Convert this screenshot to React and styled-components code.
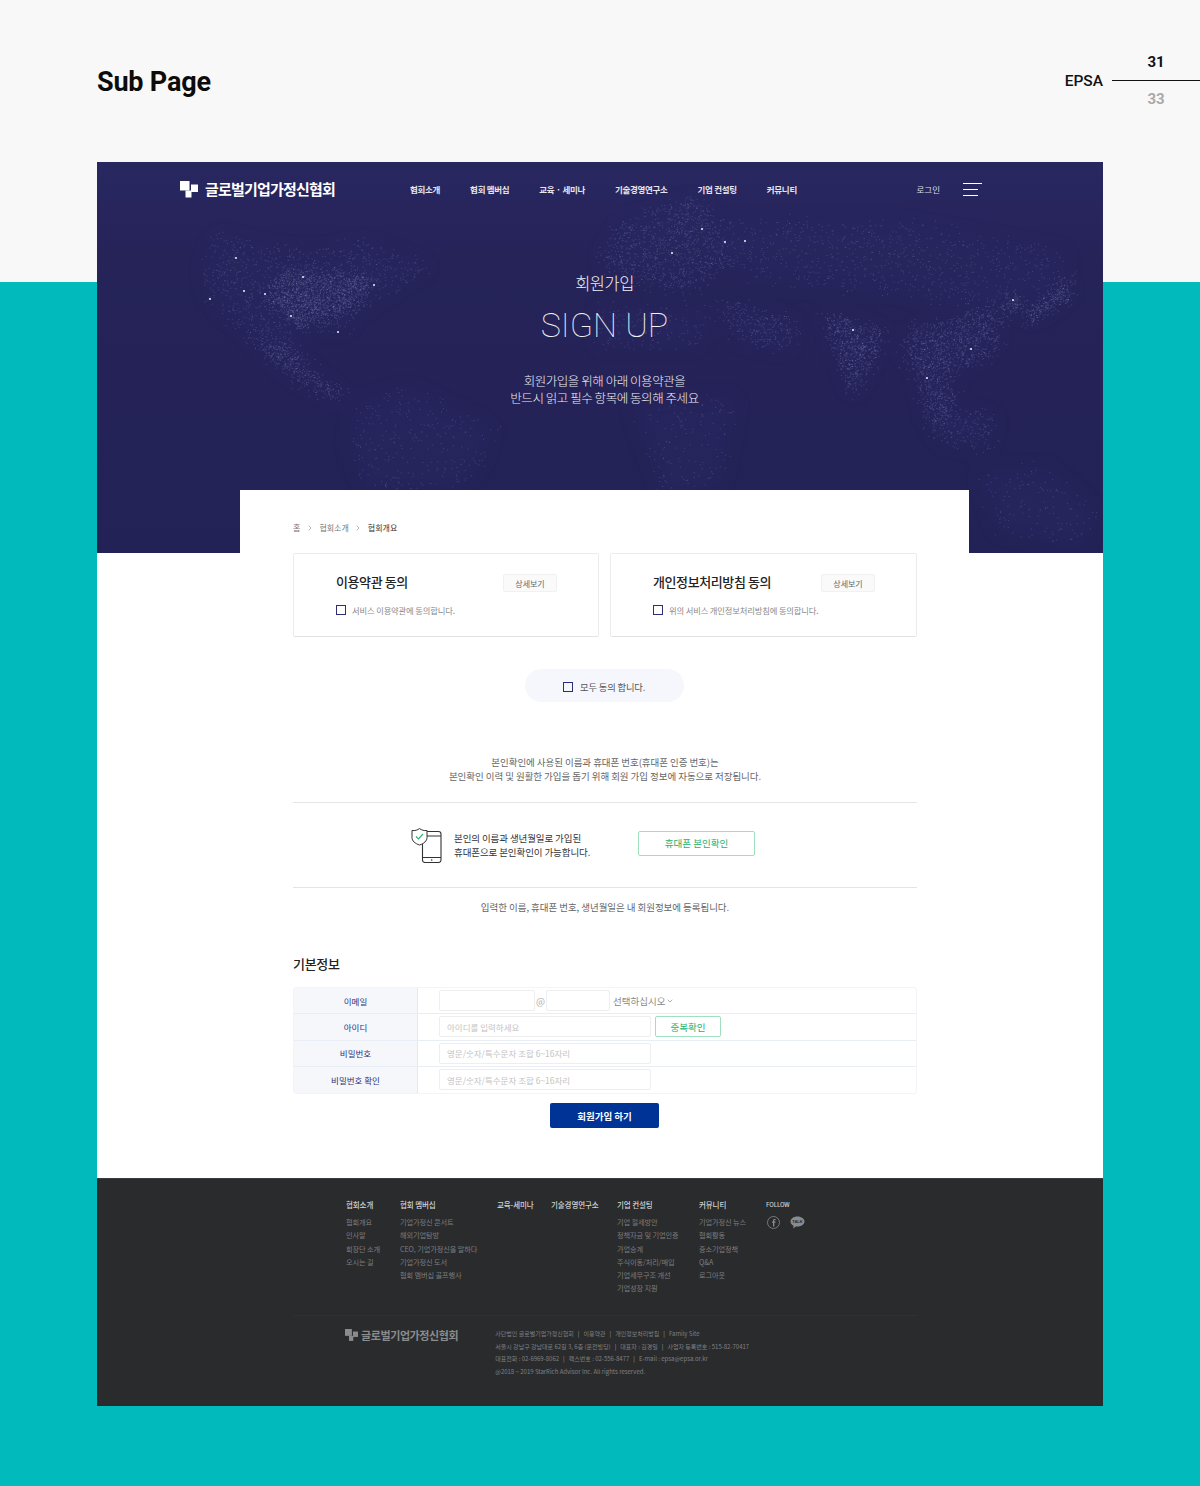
import React from 'react'
import styled, { createGlobalStyle } from 'styled-components'
import { ChevronDown, ChevronRight } from 'lucide-react'

const KR = `"Noto Sans CJK KR", "Noto Sans", sans-serif`

const GlobalStyle = createGlobalStyle`
	body {
		margin: 0;
		font-family: ${KR};
		background: #00babc;
	}
	* { box-sizing: border-box; }
`

const Page = styled.div`
	width: 1200px;
	height: 1486px;
	padding-bottom: 80px;
	background: linear-gradient(#f8f8f8 282px, #00babc 282px);
	overflow: hidden;
`

const TopBar = styled.header`
	height: 162px;
	padding: 53px 0 0 97px;
	display: flex;
	align-items: flex-start;
	justify-content: space-between;
	font-family: Roboto, sans-serif;
`

const PageTitle = styled.h1`
	margin: 0;
	padding-top: 10px;
	font-size: 27px;
	line-height: 38px;
	letter-spacing: -0.2px;
	font-weight: 700;
	color: #0c0c0c;
`

const Pager = styled.div`
	display: flex;
	align-items: center;
	gap: 9px;
`

const PagerName = styled.span`
	font-size: 15.5px;
	font-weight: 500;
	color: #111;
`

const PagerColumn = styled.div`
	width: 88px;
	text-align: center;
	font-size: 15px;
	font-weight: 700;
	line-height: 18px;
`

const PagerNumber = styled.div`
	color: ${props => props.muted ? '#a9a9a9' : '#111'};
	padding: ${props => props.muted ? '9px 0 0' : '0 0 9px'};
`

const PagerLine = styled.div`
	height: 1px;
	background: #111;
`

const Frame = styled.div`
	width: 1006px;
	height: 1244px;
	margin-left: 97px;
	background: #fff;
	display: flex;
	flex-direction: column;
`

const Hero = styled.section`
	position: relative;
	height: 391px;
	flex: none;
	overflow: hidden;
	background: linear-gradient(#292760, #252358 25%, #232256);
	color: #fff;
`

const MapArt = styled.svg`
	position: absolute;
	left: 0;
	top: 0;
`

const NavBar = styled.nav`
	position: relative;
	height: 54px;
	padding: 0 121px 0 83px;
	display: flex;
	align-items: center;
`

const Logo = styled.div`
	display: flex;
	align-items: center;
	align-self: flex-start;
	gap: ${props => props.small ? '3px' : '7px'};
	font-size: ${props => props.small ? '11px' : '15px'};
	line-height: ${props => props.small ? '14px' : '54px'};
	font-weight: 700;
	letter-spacing: ${props => props.small ? '-0.4px' : '-0.8px'};
	color: ${props => props.small ? '#8a8b8c' : '#fff'};
	white-space: nowrap;
`

const NavList = styled.div`
	margin: -1px 0 0 75px;
	display: flex;
	gap: 30px;
`

const NavItem = styled.a`
	font-size: 8.5px;
	font-weight: 700;
	letter-spacing: -0.3px;
	color: #e6e6ee;
	white-space: nowrap;
`

const LoginLink = styled.a`
	margin-left: auto;
	font-size: 8.5px;
	color: #dcdce8;
`

const Burger = styled.div`
	margin-left: 23px;
	width: 19px;
	display: flex;
	flex-direction: column;
	gap: 5px;
`

const BurgerLine = styled.i`
	display: block;
	height: 1px;
	background: #fff;
	width: ${props => props.short ? '15px' : '19px'};
`

const HeroText = styled.div`
	position: relative;
	padding: 55px 0 0 9px;
	text-align: center;
`

const HeroLabel = styled.div`
	font-size: 16.5px;
	line-height: 25px;
	font-weight: 300;
	letter-spacing: -0.5px;
	color: #eeeef4;
`

const HeroTitle = styled.h2`
	margin: 9px 0 0;
	font-family: Roboto, sans-serif;
	font-size: 34px;
	line-height: 41px;
	font-weight: 100;
	color: #f2f2f6;
`

const HeroCopy = styled.p`
	margin: 26px 0 0;
	font-size: 12.5px;
	line-height: 17px;
	font-weight: 300;
	letter-spacing: -0.45px;
	color: #eeeef4;
`

const Sheet = styled.main`
	position: relative;
	flex: none;
	width: 729px;
	height: 688px;
	margin: -63px 0 0 143px;
	padding: 0 52px 0 53px;
	background: #fff;
`

const Crumbs = styled.div`
	height: 63px;
	padding-top: 31px;
	display: flex;
	align-items: flex-start;
	gap: 5.5px;
	font-size: 8px;
	line-height: 14px;
	color: #777;
	svg { margin-top: 3px; color: #999; }
`

const CrumbCurrent = styled.span`
	color: #333;
`

const Agreements = styled.div`
	display: grid;
	grid-template-columns: 306px 307px;
	gap: 11px;
`

const AgreeCard = styled.div`
	height: 84px;
	padding: 18px 41px 0 42px;
	border: 1px solid #ececec;
	border-bottom-color: #e2e2e2;
	border-radius: 2px;
`

const AgreeHead = styled.div`
	display: flex;
	align-items: center;
	justify-content: space-between;
`

const AgreeTitle = styled.h3`
	margin: 0;
	font-size: 13px;
	line-height: 20px;
	font-weight: 500;
	letter-spacing: -0.4px;
	color: #222;
`

const DetailButton = styled.button`
	width: 54px;
	height: 18px;
	margin-top: 2px;
	padding: 0;
	border: 1px solid #f1f1f1;
	border-radius: 2px;
	background: #fafafa;
	font-family: ${KR};
	font-size: 8px;
	color: #666;
`

const CheckRow = styled.label`
	margin-top: ${props => props.flush ? '0' : '12px'};
	display: flex;
	align-items: center;
	gap: ${props => props.flush ? '7px' : '6px'};
	font-size: ${props => props.flush ? '9.3px' : '8.3px'};
	line-height: 12px;
	letter-spacing: -0.15px;
	color: ${props => props.flush ? '#555' : '#888'};
`

const CheckBox = styled.span`
	flex: none;
	width: 10px;
	height: 10px;
	border: 1px solid #2c2f78;
`

const AgreeAll = styled.div`
	width: 159px;
	height: 33px;
	margin: 32px 0 0 232px;
	padding: 3px 0 0 38px;
	display: flex;
	align-items: center;
	border-radius: 17px;
	background: #f5f7fc;
`

const Notice = styled.p`
	margin: ${props => props.top || '0'};
	text-align: center;
	font-size: 9.5px;
	line-height: 14px;
	letter-spacing: -0.05px;
	color: #666;
`

const VerifyBox = styled.div`
	height: 86px;
	margin-top: 19px;
	padding-left: 118px;
	display: flex;
	align-items: center;
	border-top: 1px solid #e4e4e4;
	border-bottom: 1px solid #e4e4e4;
`

const VerifyText = styled.div`
	margin-left: 12px;
	width: 184px;
	font-size: 9.5px;
	line-height: 14px;
	letter-spacing: -0.1px;
	color: #333;
`

const GreenButton = styled.button`
	width: ${props => props.small ? '66px' : '117px'};
	height: ${props => props.small ? '21px' : '25px'};
	padding: 0;
	margin: ${props => props.small ? '0 0 0 3px' : '0 0 4px'};
	border: 1px solid #9fe0bf;
	border-radius: 2px;
	background: #fff;
	font-family: ${KR};
	font-size: 9.5px;
	color: #23b26a;
`

const SectionTitle = styled.h3`
	margin: 40px 0 13px;
	font-size: 13px;
	line-height: 20px;
	font-weight: 500;
	letter-spacing: -0.3px;
	color: #222;
`

const FormTable = styled.div`
	border: 1px solid #f2f4f9;
	border-radius: 3px;
`

const FormRow = styled.div`
	display: grid;
	grid-template-columns: 124px 1fr;
	height: 26.25px;
	border-bottom: ${props => props.last ? 'none' : '1px solid #e9edf6'};
`

const RowLabel = styled.div`
	display: flex;
	align-items: center;
	justify-content: center;
	background: #f5f7fb;
	border-right: 1px solid #e4e9f4;
	font-size: 8.5px;
	color: #2c3278;
`

const RowField = styled.div`
	display: flex;
	align-items: center;
	gap: 1px;
	padding-left: 21px;
`

const TextInput = styled.input`
	width: ${props => props.width}px;
	height: 21px;
	padding: 0 7px;
	border: 1px solid #eeeeee;
	border-radius: 2px;
	background: #fff;
	font-family: ${KR};
	font-size: 8.5px;
	outline: none;
	&::placeholder { color: #c4c4c4; }
`

const AtSign = styled.span`
	width: 9px;
	font-size: 9.5px;
	color: #aaa;
`

const SelectText = styled.span`
	margin-left: 2px;
	display: flex;
	align-items: center;
	gap: 1px;
	font-size: 9.5px;
	color: #888;
`

const SubmitButton = styled.button`
	display: block;
	width: 109px;
	height: 25px;
	margin: 9px 0 0 257px;
	padding: 0;
	border: none;
	border-radius: 2px;
	background: #003396;
	font-family: ${KR};
	font-size: 9.5px;
	font-weight: 700;
	color: #fff;
`

const Footer = styled.footer`
	flex: none;
	height: 228px;
	background: #2a2b2d;
	border-top: 1px solid #3a3b3d;
`

const FooterNav = styled.div`
	height: 136px;
	padding: 20px 0 0 249px;
	display: flex;
`

const FooterColumn = styled.div`
	width: ${props => props.width}px;
	flex: none;
`

const FooterHead = styled.div`
	font-size: ${props => props.latin ? '6px' : '7.5px'};
	line-height: 11px;
	font-weight: 500;
	letter-spacing: -0.1px;
	color: #d2d2d2;
	margin-bottom: 6px;
`

const FooterLink = styled.div`
	font-size: 7.2px;
	line-height: 13.3px;
	letter-spacing: -0.1px;
	white-space: nowrap;
	color: #7c7d7f;
`

const FollowIcons = styled.div`
	display: flex;
	align-items: center;
	gap: 10px;
	margin-top: 2px;
	padding-left: 1px;
`

const FooterBottom = styled.div`
	width: 624px;
	margin-left: 196px;
	padding: 12px 0 0 52px;
	display: flex;
	border-top: 1px solid #2f3032;
`

const FooterInfo = styled.div`
	margin-left: 37px;
	font-size: 6px;
	line-height: 12.7px;
	white-space: nowrap;
	color: #808183;
`

const Sep = styled.span`
	margin: 0 4px;
	color: #999;
`

// seeded so the dots stay put between renders
const makeRandom = (seed) => () => {
	seed = (seed * 16807) % 2147483647
	return seed / 2147483647
}

const inside = (x, y, poly) => {
	let hit = false
	for (let i = 0, j = poly.length - 1; i < poly.length; j = i++) {
		const [xi, yi] = poly[i]
		const [xj, yj] = poly[j]
		if ((yi > y) !== (yj > y) && x < ((xj - xi) * (y - yi)) / (yj - yi) + xi) hit = !hit
	}
	return hit
}

const LAND = [
	{ n: 1000, poly: [[107,100],[120,72],[170,85],[215,90],[270,80],[335,105],[300,125],[262,150],[246,170],[225,165],[197,176],[200,198],[170,190],[150,170],[125,150],[108,130]] },
	{ n: 1500, poly: [[190,110],[280,115],[255,150],[200,165],[165,130]] },
	{ n: 380, poly: [[150,170],[197,190],[212,205],[250,235],[240,240],[195,215],[165,190]] },
	{ n: 260, poly: [[262,240],[310,225],[395,265],[385,300],[360,330],[270,330],[250,280]] },
	{ n: 1000, poly: [[525,60],[600,35],[617,60],[640,100],[590,130],[540,120],[500,100],[510,85]] },
	{ n: 800, poly: [[620,60],[800,60],[970,90],[960,130],[900,150],[800,130],[650,120]] },
	{ n: 260, poly: [[620,135],[700,160],[690,190],[640,180]] },
	{ n: 150, poly: [[500,145],[620,150],[600,185],[500,185]] },
	{ n: 140, poly: [[533,240],[640,235],[625,320],[570,345]] },
	{ n: 650, poly: [[725,150],[790,170],[760,230],[755,235],[735,180]] },
	{ n: 1000, poly: [[810,170],[900,145],[900,185],[840,225],[810,200]] },
	{ n: 240, poly: [[820,215],[860,230],[850,262],[830,262]] },
	{ n: 180, poly: [[828,238],[900,255],[890,288],[840,280]] },
	{ n: 130, poly: [[880,310],[950,305],[1000,350],[985,386],[900,370]] },
	{ n: 90, poly: [[912,135],[922,135],[920,150],[912,150]] },
	{ n: 300, poly: [[925,155],[975,115],[972,135],[935,160]] },
]

const CITIES = [
	[139,96],[206,115],[277,123],[147,129],[168,132],[113,137],[194,154],[241,170],
	[605,67],[628,80],[648,79],[575,91],[756,168],[874,187],[916,138],[830,216],
]

const buildDots = () => {
	const random = makeRandom(4217)
	let d = ''
	LAND.forEach(({ n, poly }) => {
		const xs = poly.map(p => p[0])
		const ys = poly.map(p => p[1])
		const minX = Math.min(...xs), maxX = Math.max(...xs)
		const minY = Math.min(...ys), maxY = Math.max(...ys)
		let placed = 0
		for (let tries = 0; placed < n && tries < n * 8; tries++) {
			const x = minX + random() * (maxX - minX)
			const y = minY + random() * (maxY - minY)
			if (inside(x, y, poly)) {
				// soften the polygon edge so no straight coast shows
				const px = x + (random() + random() + random() - 1.5) * 9
				const py = y + (random() + random() + random() - 1.5) * 9
				d += `M${px.toFixed(1)} ${py.toFixed(1)}h.4`
				placed++
			}
		}
	})
	return d
}

const WorldMap = () => {
	const dots = React.useMemo(buildDots, [])
	return (
		<MapArt width="1006" height="391" viewBox="0 0 1006 391">
			<defs>
				<filter id="landBlur" x="-20%" y="-20%" width="140%" height="140%">
					<feGaussianBlur stdDeviation="9" />
				</filter>
			</defs>
			<g filter="url(#landBlur)" fill="#33317a" opacity=".14">
				{LAND.map(({ poly }) => <polygon key={poly.join()} points={poly.join(' ')} />)}
			</g>
			<path d={dots} stroke="#a9a7dc" strokeWidth=".7" strokeLinecap="round" opacity=".3" fill="none" />
			{CITIES.map(([x, y]) => (
				<circle key={`${x}-${y}`} cx={x} cy={y} r="1" fill="#f2f2fa" />
			))}
		</MapArt>
	)
}

const LogoMark = ({ color = '#fff', size = 18 }) => (
	<svg width={size} height={size * 17 / 18} viewBox="0 0 18 17" fill={color}>
		<rect x="0" y="0" width="9.5" height="9.5" />
		<rect x="5.5" y="9.5" width="6" height="7" />
		<rect x="11" y="3.5" width="7" height="7.5" />
	</svg>
)

const PhoneShield = () => (
	<svg width="31" height="35" viewBox="0 0 31 35" fill="none" style={{ flex: 'none' }}>
		<rect x="11.500" y="3.500" width="18.500" height="31" rx="2.500" stroke="#333" strokeWidth="1.100" />
		<path d="M11.500 8h18.500M11.500 29.500h18.500" stroke="#333" strokeWidth="1" />
		<circle cx="20.700" cy="32" r=".8" fill="#333" />
		<path d="M1 2.500c3 .4 5.500-.4 7.500-2 2 1.600 4.500 2.400 7.500 2v7c0 3.500-3 6-7.500 7.500C4 15.500 1 13 1 9.500z" fill="#fff" stroke="#333" strokeWidth="1" />
		<path d="M5 8.500l2.500 2.500 4.500-5" stroke="#2cb673" strokeWidth="1.200" />
	</svg>
)

const FacebookIcon = () => (
	<svg width="13" height="13" viewBox="0 0 13 13" fill="none">
		<circle cx="6.500" cy="6.500" r="6" stroke="#8a8b8c" strokeWidth=".8" />
		<path d="M7.300 10.500V6.800h1.100l.2-1.300H7.300v-.8c0-.4.1-.6.600-.6h.7V3c-.2 0-.6-.1-1-.1-1 0-1.600.6-1.600 1.600v1h-1v1.300h1v3.700z" fill="#8a8b8c" />
	</svg>
)

const TalkIcon = () => (
	<svg width="15" height="13" viewBox="0 0 15 13">
		<path d="M7.500.5C3.600.5.500 2.800.500 5.600c0 1.800 1.300 3.400 3.200 4.300l-.7 2.600 3-2c.5.100 1 .1 1.500.1 3.900 0 7-2.300 7-5S11.400.500 7.500.500z" fill="#8a8b8c" />
		<text x="7.500" y="7.200" textAnchor="middle" fontSize="4" fontWeight="700" fontFamily="Liberation Sans, sans-serif" fill="#2a2b2d">TALK</text>
	</svg>
)

const NAV_ITEMS = ['협회소개', '협회 멤버십', '교육 · 세미나', '기술경영연구소', '기업 컨설팅', '커뮤니티']

const FOOTER_COLUMNS = [
	{ width: 54, head: '협회소개', links: ['협회개요', '인사말', '회장단 소개', '오시는 길'] },
	{ width: 97, head: '협회 멤버십', links: ['기업가정신 콘서트', '해외기업탐방', 'CEO, 기업가정신을 말하다', '기업가정신 도서', '협회 멤버십 골프행사'] },
	{ width: 54, head: '교육-세미나', links: [] },
	{ width: 66, head: '기술경영연구소', links: [] },
	{ width: 82, head: '기업 컨설팅', links: ['기업 절세방안', '정책자금 및 기업인증', '가업승계', '주식이동/처리/매입', '기업세무구조 개선', '기업성장 지원'] },
	{ width: 67, head: '커뮤니티', links: ['기업가정신 뉴스', '협회활동', '중소기업정책', 'Q&A', '로그아웃'] },
]

const FORM_PASSWORD_HINT = '영문/숫자/특수문자 조합 6~16자리'

const App = () => {
	return (
		<Page>
			<GlobalStyle />
			<TopBar>
				<PageTitle>Sub Page</PageTitle>
				<Pager>
					<PagerName>EPSA</PagerName>
					<PagerColumn>
						<PagerNumber>31</PagerNumber>
						<PagerLine />
						<PagerNumber muted>33</PagerNumber>
					</PagerColumn>
				</Pager>
			</TopBar>
			<Frame>
				<Hero>
					<WorldMap />
					<NavBar>
						<Logo><LogoMark />글로벌기업가정신협회</Logo>
						<NavList>
							{NAV_ITEMS.map(item => <NavItem key={item}>{item}</NavItem>)}
						</NavList>
						<LoginLink>로그인</LoginLink>
						<Burger>
							<BurgerLine />
							<BurgerLine short />
							<BurgerLine short />
						</Burger>
					</NavBar>
					<HeroText>
						<HeroLabel>회원가입</HeroLabel>
						<HeroTitle>SIGN UP</HeroTitle>
						<HeroCopy>회원가입을 위해 아래 이용약관을<br />반드시 읽고 필수 항목에 동의해 주세요</HeroCopy>
					</HeroText>
				</Hero>
				<Sheet>
					<Crumbs>
						<span>홈</span>
						<ChevronRight size={8} />
						<span>협회소개</span>
						<ChevronRight size={8} />
						<CrumbCurrent>협회개요</CrumbCurrent>
					</Crumbs>
					<Agreements>
						<AgreeCard>
							<AgreeHead>
								<AgreeTitle>이용약관 동의</AgreeTitle>
								<DetailButton>상세보기</DetailButton>
							</AgreeHead>
							<CheckRow><CheckBox />서비스 이용약관에 동의합니다.</CheckRow>
						</AgreeCard>
						<AgreeCard>
							<AgreeHead>
								<AgreeTitle>개인정보처리방침 동의</AgreeTitle>
								<DetailButton>상세보기</DetailButton>
							</AgreeHead>
							<CheckRow><CheckBox />위의 서비스 개인정보처리방침에 동의합니다.</CheckRow>
						</AgreeCard>
					</Agreements>
					<AgreeAll>
						<CheckRow flush><CheckBox />모두 동의 합니다.</CheckRow>
					</AgreeAll>
					<Notice top="53px 0 0">
						본인확인에 사용된 이름과 휴대폰 번호(휴대폰 인증 번호)는<br />
						본인확인 이력 및 원활한 가입을 돕기 위해 회원 가입 정보에 자동으로 저장됩니다.
					</Notice>
					<VerifyBox>
						<PhoneShield />
						<VerifyText>본인의 이름과 생년월일로 가입된<br />휴대폰으로 본인확인이 가능합니다.</VerifyText>
						<GreenButton>휴대폰 본인확인</GreenButton>
					</VerifyBox>
					<Notice top="12px 0 0">입력한 이름, 휴대폰 번호, 생년월일은 내 회원정보에 등록됩니다.</Notice>
					<SectionTitle>기본정보</SectionTitle>
					<FormTable>
						<FormRow>
							<RowLabel>이메일</RowLabel>
							<RowField>
								<TextInput width={96} />
								<AtSign>@</AtSign>
								<TextInput width={64} />
								<SelectText>선택하십시오<ChevronDown size={8} /></SelectText>
							</RowField>
						</FormRow>
						<FormRow>
							<RowLabel>아이디</RowLabel>
							<RowField>
								<TextInput width={212} placeholder="아이디를 입력하세요" />
								<GreenButton small>중복확인</GreenButton>
							</RowField>
						</FormRow>
						<FormRow>
							<RowLabel>비밀번호</RowLabel>
							<RowField><TextInput width={212} placeholder={FORM_PASSWORD_HINT} /></RowField>
						</FormRow>
						<FormRow last>
							<RowLabel>비밀번호 확인</RowLabel>
							<RowField><TextInput width={212} placeholder={FORM_PASSWORD_HINT} /></RowField>
						</FormRow>
					</FormTable>
					<SubmitButton>회원가입 하기</SubmitButton>
				</Sheet>
				<Footer>
					<FooterNav>
						{FOOTER_COLUMNS.map(col => (
							<FooterColumn key={col.head} width={col.width}>
								<FooterHead>{col.head}</FooterHead>
								{col.links.map(link => <FooterLink key={link}>{link}</FooterLink>)}
							</FooterColumn>
						))}
						<FooterColumn width={50}>
							<FooterHead latin>FOLLOW</FooterHead>
							<FollowIcons><FacebookIcon /><TalkIcon /></FollowIcons>
						</FooterColumn>
					</FooterNav>
					<FooterBottom>
						<Logo small><LogoMark color="#8a8b8c" size={13} />글로벌기업가정신협회</Logo>
						<FooterInfo>
							<div>사단법인 글로벌기업가정신협회<Sep>|</Sep>이용약관<Sep>|</Sep>개인정보처리방침<Sep>|</Sep>Family Site</div>
							<div>서울시 강남구 강남대로 62길 3, 6층 (운전빌딩)<Sep>|</Sep>대표자 : 김경일<Sep>|</Sep>사업자 등록번호 : 515-82-70417</div>
							<div>대표전화 : 02-6969-8062<Sep>|</Sep>팩스번호 : 02-556-8477<Sep>|</Sep>E-mail : epsa@epsa.or.kr</div>
							<div>@2018 ~ 2019 StarRich Advisor Inc. All rights reserved.</div>
						</FooterInfo>
					</FooterBottom>
				</Footer>
			</Frame>
		</Page>
	)
}

export default App
